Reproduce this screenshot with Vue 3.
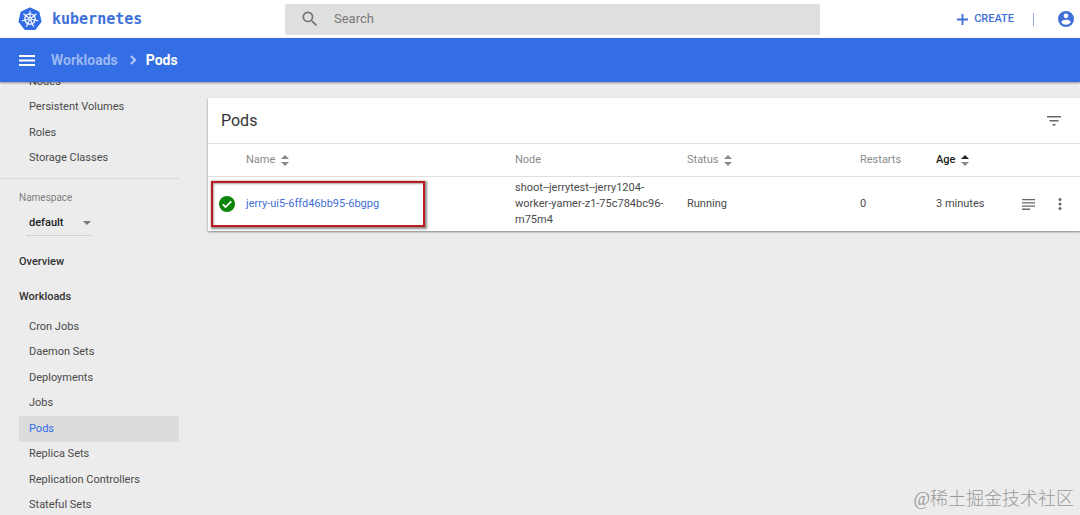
<script setup>
import { ref } from 'vue'

const search = ref('')
const namespace = ref('default')
const clusterLinks = ['Nodes', 'Persistent Volumes', 'Roles', 'Storage Classes']
const workloadLinks = [
  'Cron Jobs', 'Daemon Sets', 'Deployments', 'Jobs', 'Pods',
  'Replica Sets', 'Replication Controllers', 'Stateful Sets',
]
const columns = [
  { label: 'Name', key: 'name', sort: 'both' },
  { label: 'Node', key: 'node' },
  { label: 'Status', key: 'status', sort: 'both' },
  { label: 'Restarts', key: 'restarts' },
  { label: 'Age', key: 'age', sort: 'up' },
]
const pods = [
  {
    name: 'jerry-ui5-6ffd46bb95-6bgpg',
    node: 'shoot--jerrytest--jerry1204-worker-yamer-z1-75c784bc96-m75m4',
    status: 'Running',
    restarts: 0,
    age: '3 minutes',
  },
]
const spokes = [0, 1, 2, 3, 4, 5, 6].map((n) => {
  const a = (n * 2 * Math.PI) / 7 - Math.PI / 2
  return { x: 12 + 8 * Math.cos(a), y: 12 + 8 * Math.sin(a) }
})
</script>

<template>
  <div class="shell">
    <header class="top">
      <a class="brand" href="#">
        <svg class="logo" viewBox="0 0 24 24" aria-hidden="true">
          <path fill="#326de6" stroke="#326de6" stroke-width="1.6" stroke-linejoin="round" d="M12 1.2 20.6 5.3 22.8 14.6 16.8 22.2H7.2L1.2 14.6 3.4 5.3z" />
          <g fill="none" stroke="#fff">
            <circle cx="12" cy="12" r="5.2" stroke-width="1.3" />
            <line v-for="(s, i) in spokes" :key="i" x1="12" y1="12" :x2="s.x" :y2="s.y" stroke-width="1.1" stroke-linecap="round" />
          </g>
          <circle cx="12" cy="12" r="1.7" fill="#fff" />
          <circle cx="12" cy="12" r=".7" fill="#326de6" />
        </svg>
        <span>kubernetes</span>
      </a>
      <label class="search">
        <svg viewBox="0 0 24 24" aria-hidden="true"><path d="M15.5 14h-.79l-.28-.27A6.47 6.47 0 0 0 16 9.5 6.5 6.5 0 1 0 9.5 16c1.61 0 3.09-.59 4.23-1.57l.27.28v.79l5 4.99L20.49 19zm-6 0a4.5 4.5 0 1 1 0-9 4.5 4.5 0 0 1 0 9z" /></svg>
        <input v-model="search" type="text" placeholder="Search" aria-label="Search" />
      </label>
      <div class="actions">
        <button class="create" type="button">
          <svg viewBox="0 0 12 12" aria-hidden="true"><path d="M5 0h2v5h5v2H7v5H5V7H0V5h5z" /></svg>
          <span>CREATE</span>
        </button>
        <span class="bar"></span>
        <button class="user" type="button" aria-label="User">
          <svg viewBox="2 2 20 20" aria-hidden="true"><path d="M12 2a10 10 0 1 0 0 20 10 10 0 0 0 0-20zm0 3a3 3 0 1 1 0 6 3 3 0 0 1 0-6zm0 14.2a7.2 7.2 0 0 1-6-3.22c.03-1.99 4-3.08 6-3.08s5.97 1.09 6 3.08a7.2 7.2 0 0 1-6 3.22z" /></svg>
        </button>
      </div>
    </header>

    <nav class="crumbs" aria-label="Breadcrumb">
      <button type="button" aria-label="Menu">
        <svg viewBox="0 0 16 11" aria-hidden="true"><path d="M0 0h16v2H0zM0 4.5h16v2H0zM0 9h16v2H0z" /></svg>
      </button>
      <a href="#">Workloads</a>
      <svg class="chev" viewBox="0 0 6 10" aria-hidden="true"><path d="m1 1 4 4-4 4" /></svg>
      <span>Pods</span>
    </nav>

    <div class="body">
      <aside class="side">
        <ul class="links">
          <li v-for="l in clusterLinks" :key="l"><a href="#">{{ l }}</a></li>
        </ul>
        <div class="ns">
          <label for="ns">Namespace</label>
          <div class="pick">
            <select id="ns" v-model="namespace"><option>default</option></select>
            <svg viewBox="0 0 8 4" aria-hidden="true"><path d="M0 0h8L4 4z" /></svg>
          </div>
        </div>
        <a class="group" href="#">Overview</a>
        <a class="group" href="#">Workloads</a>
        <ul class="links long">
          <li v-for="l in workloadLinks" :key="l"><a href="#" :class="{ on: l === 'Pods' }">{{ l }}</a></li>
        </ul>
      </aside>

      <main class="main">
        <section class="card">
          <div class="head">
            <h1>Pods</h1>
            <button type="button" aria-label="Filter">
              <svg class="filter" viewBox="0 0 14 10" aria-hidden="true"><path d="M0 0h14v1.5H0zM2.5 4h9v1.5h-9zM5.5 8h3v1.5h-3z" /></svg>
            </button>
          </div>
          <table>
            <thead>
              <tr>
                <th class="c-icon"></th>
                <th v-for="c in columns" :key="c.key" :class="['c-' + c.key, { sorted: c.sort === 'up' }]">
                  <span class="th">{{ c.label }}
                    <svg v-if="c.sort" class="sort" viewBox="0 0 8 11" aria-hidden="true">
                      <path class="up" d="M0 4h8L4 0z" /><path class="down" d="M0 7h8l-4 4z" />
                    </svg>
                  </span>
                </th>
                <th class="c-log"></th>
                <th class="c-more"></th>
              </tr>
            </thead>
            <tbody>
              <tr v-for="p in pods" :key="p.name">
                <td class="c-icon">
                  <svg class="ok" viewBox="0 0 16 16" aria-hidden="true"><circle cx="8" cy="8" r="8" fill="#0a850a" /><path d="m3.8 8.3 2.8 2.8 5.7-5.7" fill="none" stroke="#fff" stroke-width="1.8" /></svg>
                </td>
                <td><a href="#">{{ p.name }}</a></td>
                <td class="node">{{ p.node }}</td>
                <td>{{ p.status }}</td>
                <td>{{ p.restarts }}</td>
                <td>{{ p.age }}</td>
                <td>
                  <button type="button" aria-label="Logs">
                    <svg class="log" viewBox="0 0 13 11" aria-hidden="true"><path d="M0 0h13v1.3H0zM0 3.2h13v1.3H0zM0 6.4h13v1.3H0zM0 9.6h8v1.3H0z" /></svg>
                  </button>
                </td>
                <td>
                  <button type="button" aria-label="Actions">
                    <svg class="more" viewBox="0 0 4 12" aria-hidden="true"><circle cx="2" cy="1.5" r="1.5" /><circle cx="2" cy="6" r="1.5" /><circle cx="2" cy="10.5" r="1.5" /></svg>
                  </button>
                </td>
              </tr>
            </tbody>
          </table>
          <div class="mark"></div>
        </section>
      </main>
    </div>
    <div class="credit">@稀土掘金技术社区</div>
  </div>
</template>

<style>
body { margin: 0; }
</style>

<style scoped>
.shell {
  position: relative;
  display: flex;
  flex-direction: column;
  height: 100vh;
  overflow: hidden;
  background: #ececec;
  color: #4a4a4a;
  font: 11px/16px Roboto, sans-serif;
}
a { color: inherit; text-decoration: none; }
button { display: flex; padding: 0; border: 0; background: none; color: inherit; font: inherit; cursor: pointer; }
svg { display: block; fill: currentColor; }
ul { margin: 0; padding: 0; list-style: none; }

.top {
  flex: none;
  display: grid;
  grid-template-columns: 285px 1fr 260px;
  align-items: center;
  height: 38px;
  background: #fff;
  color: #3f70d8;
}
.brand {
  display: flex;
  align-items: center;
  gap: 10px;
  padding-left: 18px;
  font: bold 15px/20px "DejaVu Sans Mono", monospace;
}
.logo { width: 24px; height: 24px; }
.search {
  display: flex;
  align-items: center;
  gap: 14px;
  height: 31px;
  padding-left: 15px;
  border-radius: 2px;
  background: #dfdfdf;
  color: #727272;
}
.search svg { width: 20px; height: 20px; }
.search input {
  flex: 1;
  min-width: 0;
  padding: 0;
  border: 0;
  outline: 0;
  background: none;
  color: #424242;
  font: 13px/16px Roboto, sans-serif;
}
.search input::placeholder { color: #7a7a7a; opacity: 1; }
.actions { display: flex; align-items: center; justify-content: flex-end; padding-right: 6px; }
.create { align-items: center; gap: 6px; font-size: 11px; font-weight: 500; }
.create svg { width: 11px; height: 11px; }
.bar { width: 1px; height: 13px; margin: 0 24px 0 19px; background: #8fa9dc; }
.user svg { width: 16px; height: 16px; }

.crumbs {
  position: relative;
  z-index: 1;
  flex: none;
  display: flex;
  align-items: center;
  height: 44px;
  padding-left: 19px;
  background: #346ee4;
  box-shadow: 0 1px 2px rgba(0, 0, 0, .4);
  color: #fff;
  font-size: 14px;
  font-weight: 700;
}
.crumbs button svg { width: 16px; height: 11px; }
.crumbs a { margin: 0 12px 0 16px; color: #9ab8f4; }
.chev { width: 6px; height: 10px; margin-right: 10px; fill: none; stroke: #b5c9f5; stroke-width: 2; }

.body { flex: 1; display: grid; grid-template-columns: 208px 1fr; min-height: 0; }
.side { min-height: 0; overflow: hidden; }
.side > .links:first-child { margin-top: -13px; }
.links { display: grid; grid-auto-rows: 1fr; height: 102px; padding: 0 29px 0 19px; }
.links.long { height: 204px; }
.links li { display: grid; }
.links a { display: flex; align-items: center; padding-left: 10px; }
.links .on { background: #dcdcdc; color: #326de6; }
.ns { margin: 7px 29px 8px 0; padding: 11px 0 0 19px; border-top: 1px solid #d8d8d8; }
.ns label { display: block; color: #808080; font-size: 10px; }
.pick {
  display: flex;
  align-items: center;
  width: 65px;
  height: 24px;
  padding-top: 5px;
  margin-left: 7px;
  border-bottom: 1px solid #d0d0d0;
}
.pick select {
  flex: 1;
  min-width: 0;
  padding: 0 0 0 3px;
  border: 0;
  appearance: none;
  background: none;
  color: #222;
  font: 500 11px/16px Roboto, sans-serif;
}
.pick svg { flex: none; width: 8px; height: 4px; color: #777; }
.group { display: block; height: 35px; padding-left: 19px; color: #333; font-weight: 500; line-height: 35px; }

.main { min-width: 0; padding-top: 16px; }
.card { position: relative; background: #fff; box-shadow: 0 1px 2px rgba(0, 0, 0, .45); }
.head { display: flex; align-items: center; justify-content: space-between; height: 45px; padding: 0 19px 0 13px; border-bottom: 1px solid #e0e0e0; color: #666; }
.head h1 { margin: 0; color: #333; font-size: 16px; font-weight: 400; }
.filter { width: 14px; height: 10px; }
table { width: 100%; border-collapse: collapse; table-layout: fixed; }
th, td { padding: 0; text-align: left; }
th { height: 32px; border-bottom: 1px solid #e0e0e0; color: #8a8a8a; font-weight: 400; }
td { height: 54px; color: #4a4a4a; }
td a { color: #3f70d8; }
td button { color: #666; }
.c-icon { width: 38px; }
.c-node { width: 172px; }
.c-status { width: 173px; }
.c-restarts { width: 76px; }
.c-age { width: 86px; }
.c-log { width: 36px; }
.c-more { width: 22px; }
.th { display: flex; align-items: center; gap: 6px; }
.sort { width: 8px; height: 11px; color: #8a8a8a; }
.sorted { color: #222; font-weight: 500; }
.sorted .up { fill: #222; }
.node { padding-right: 16px; overflow-wrap: anywhere; }
.ok { width: 16px; height: 16px; margin-left: 11px; }
.log { width: 13px; height: 11px; }
.more { width: 4px; height: 12px; }
.mark {
  position: absolute;
  top: 83px;
  left: 3px;
  width: 210px;
  height: 42px;
  border: 2px solid #bb1c22;
  box-shadow: 1px 1px 2px 1px rgba(0, 0, 0, .45), inset 1px 1px 2px rgba(0, 0, 0, .35);
}
.credit {
  position: absolute;
  right: 6px;
  bottom: 4px;
  color: #9a9a9a;
  font: 300 18px/24px "Liberation Serif", "Noto Sans CJK SC", serif;
}
</style>
